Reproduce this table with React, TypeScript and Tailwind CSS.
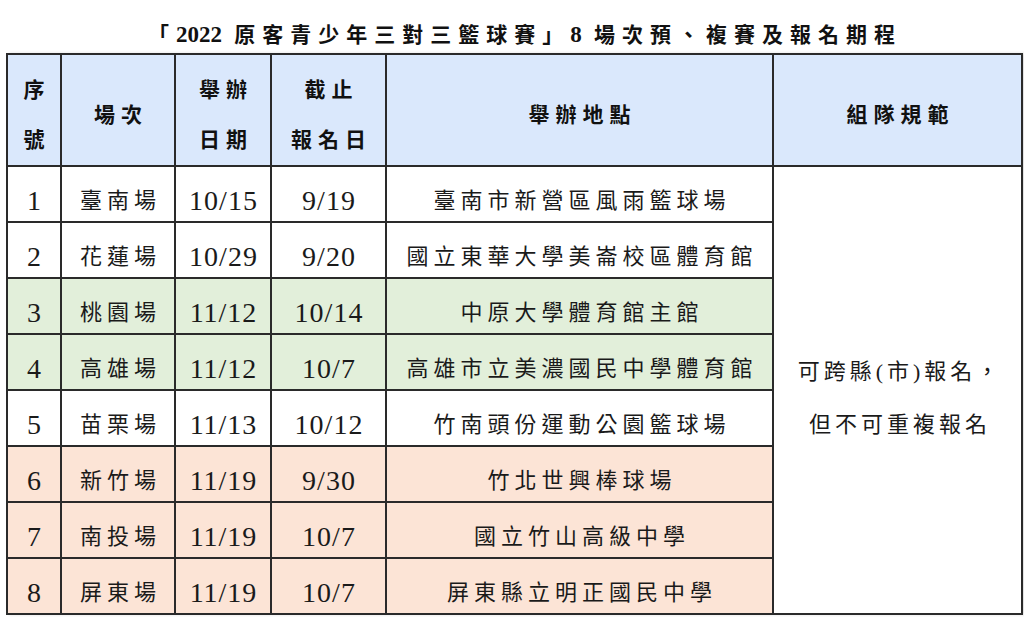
const rows = [
  { n: "1", name: "臺南場", date: "10/15", deadline: "9/19", place: "臺南市新營區風雨籃球場", bg: "bg-white" },
  { n: "2", name: "花蓮場", date: "10/29", deadline: "9/20", place: "國立東華大學美崙校區體育館", bg: "bg-white" },
  { n: "3", name: "桃園場", date: "11/12", deadline: "10/14", place: "中原大學體育館主館", bg: "bg-[#e2efda]" },
  { n: "4", name: "高雄場", date: "11/12", deadline: "10/7", place: "高雄市立美濃國民中學體育館", bg: "bg-[#e2efda]" },
  { n: "5", name: "苗栗場", date: "11/13", deadline: "10/12", place: "竹南頭份運動公園籃球場", bg: "bg-white" },
  { n: "6", name: "新竹場", date: "11/19", deadline: "9/30", place: "竹北世興棒球場", bg: "bg-[#fce4d6]" },
  { n: "7", name: "南投場", date: "11/19", deadline: "10/7", place: "國立竹山高級中學", bg: "bg-[#fce4d6]" },
  { n: "8", name: "屏東場", date: "11/19", deadline: "10/7", place: "屏東縣立明正國民中學", bg: "bg-[#fce4d6]" },
];

const th =
  "border-2 border-[#2a2a2a] bg-[#dae8fc] text-center align-middle font-bold text-[21px] tracking-[6px] pl-[6px] pt-[10px] leading-[50px] text-[#111]";
const cell =
  "border-2 border-[#2a2a2a] text-center align-middle h-[56px] pt-[14px] leading-[30px] text-[#1a1a1a]";
// CJK text cells
const td = `${cell} pl-[5px] text-[22px] tracking-[5px]`;
// number cells (Times-like digits)
const num = `${cell} pl-[1px] text-[28px] tracking-[1px]`;

export default function App() {
  return (
    <div
      className="w-[1024px] h-[617px] bg-white overflow-hidden"
      style={{ fontFamily: '"Liberation Serif", "Noto Sans CJK TC", serif' }}
    >
      {/* Title */}
      <div className="h-[53px] flex items-end justify-center pb-[1px] pl-[26px]">
        <h1 className="text-[21px] font-bold text-[#111]">
          <span className="tracking-[7px]">「</span>
          <span className="text-[23px]">2022</span>
          <span className="tracking-[7px]"> 原客青少年三對三籃球賽」</span>
          <span className="text-[23px]">8</span>
          <span className="tracking-[7px]"> 場次預、複賽及報名期程</span>
        </h1>
      </div>

      <div className="flex">
        <div className="w-[6px]" />
        <table className="table-fixed border-collapse w-[1015px] shadow-[3px_0_3px_rgba(0,0,0,0.12)]">
          <colgroup>
            <col className="w-[54px]" />
            <col className="w-[114px]" />
            <col className="w-[96px]" />
            <col className="w-[115px]" />
            <col className="w-[387px]" />
            <col className="w-[249px]" />
          </colgroup>
          <thead>
            <tr className="h-[111px]">
              <th className={th}>
                序
                <br />號
              </th>
              <th className={th}>場次</th>
              <th className={th}>
                舉辦
                <br />日期
              </th>
              <th className={th}>
                截止
                <br />報名日
              </th>
              <th className={th}>舉辦地點</th>
              <th className={th}>組隊規範</th>
            </tr>
          </thead>
          <tbody>
            {rows.map((r, i) => (
              <tr key={r.n} className={r.bg}>
                <td className={num}>{r.n}</td>
                <td className={td}>{r.name}</td>
                <td className={num}>{r.date}</td>
                <td className={num}>{r.deadline}</td>
                <td className={td}>{r.place}</td>
                {i === 0 && (
                  <td
                    rowSpan={8}
                    className="border-2 border-[#2a2a2a] bg-white text-center align-middle pt-[16px] pl-[5px] text-[22px] tracking-[4px] leading-[53px] text-[#1a1a1a]"
                  >
                    可跨縣(市)報名，
                    <br />
                    但不可重複報名
                  </td>
                )}
              </tr>
            ))}
          </tbody>
        </table>
      </div>
    </div>
  );
}
